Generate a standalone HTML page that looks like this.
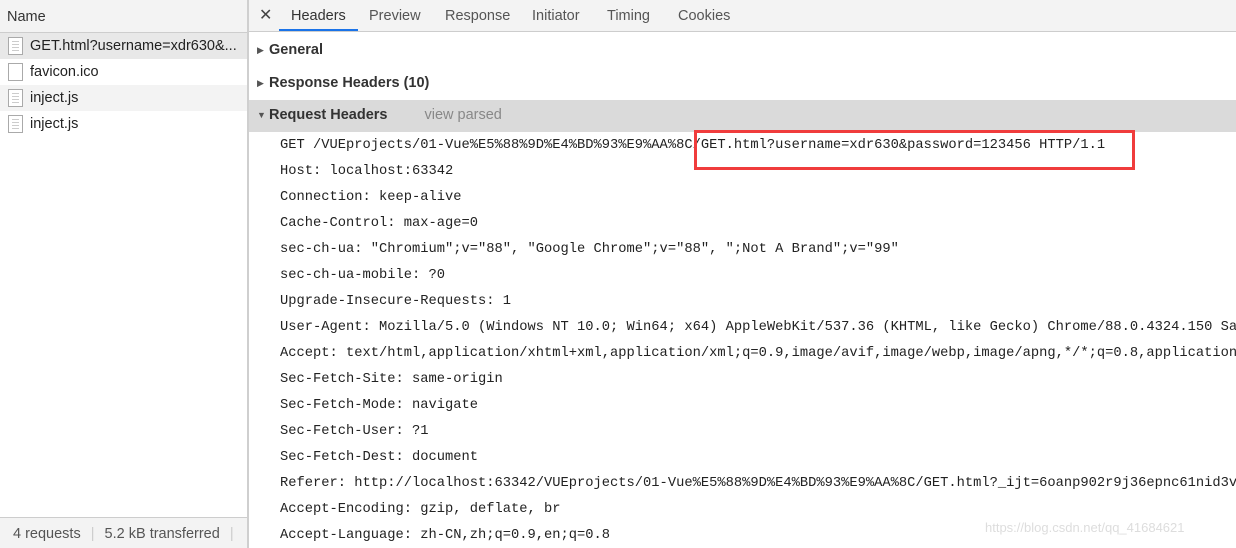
<!DOCTYPE html>
<html><head><style>
*{margin:0;padding:0;box-sizing:border-box}
body{width:1236px;height:548px;overflow:hidden;background:#fff;font-family:"Liberation Sans",sans-serif;position:relative;color:#333}
.left{position:absolute;left:0;top:0;width:247px;height:548px;background:#fff;overflow:hidden}
.sep{position:absolute;left:247px;top:0;width:2px;height:548px;background:#cfcfcf}
.lh{height:33px;background:#f3f3f3;border-bottom:1px solid #cdcdcd;font-size:14.5px;padding:9px 7px;color:#333}
.row{height:26px;font-size:14.5px;padding:5px 0 0 30px;position:relative;color:#222;white-space:nowrap}
.row .ic{position:absolute;left:8px;top:4px;width:15px;height:18px;border:1px solid #aaa;background:#fff}
.row .ic.l::after{content:"";position:absolute;left:3px;top:3px;width:7px;height:10px;background:repeating-linear-gradient(#ccc 0 1px,transparent 1px 3px)}
.foot{position:absolute;left:0;top:517px;width:247px;height:31px;background:#f3f3f3;border-top:1px solid #cdcdcd;font-size:14.5px;color:#555;padding:8px 13px;white-space:nowrap}
.right{position:absolute;left:249px;top:0;width:987px;height:548px;overflow:hidden}
.tabs{height:32px;background:#f3f3f3;border-bottom:1px solid #cdcdcd;font-size:14.5px;position:relative;color:#555}
.tabs span{position:absolute;top:8px}
.mono{font-family:"Liberation Mono",monospace;font-size:13.75px;color:#222;position:absolute;left:31px;white-space:nowrap}
.sec{position:absolute;left:0;width:987px;font-size:14.5px;font-weight:bold;color:#333;padding-left:20px}
.tri{position:absolute;left:8px;font-size:9px;color:#555;font-weight:normal}
</style></head><body>
<div class="left">
<div class="lh">Name</div>
<div class="row" style="background:#e8e8e8"><div class="ic l"></div>GET.html?username=xdr630&amp;...</div>
<div class="row"><div class="ic"></div>favicon.ico</div>
<div class="row" style="background:#f3f3f3"><div class="ic l"></div>inject.js</div>
<div class="row"><div class="ic l"></div>inject.js</div>
<div class="foot">4 requests <span style="color:#ccc;margin:0 6px">|</span> 5.2 kB transferred <span style="color:#ccc;margin-left:6px">|</span></div>
</div>
<div class="sep"></div>
<div class="right">
<div class="tabs">
<span style="left:10px;top:5px;font-size:16px;color:#444">✕</span>
<span style="left:42px;color:#333">Headers</span>
<div style="position:absolute;left:30px;top:29px;width:79px;height:2px;background:#1a73e8"></div>
<span style="left:120px">Preview</span>
<span style="left:196px">Response</span>
<span style="left:283px">Initiator</span>
<span style="left:358px">Timing</span>
<span style="left:429px">Cookies</span>
</div>
<div class="sec" style="top:42px"><span class="tri" style="top:3px">▶</span>General</div>
<div class="sec" style="top:75px"><span class="tri" style="top:3px">▶</span>Response Headers (10)</div>
<div class="sec" style="top:100px;height:32px;background:#dadada;padding-top:7px"><span class="tri" style="top:10px">▼</span>Request Headers<span style="font-weight:normal;color:#888;margin-left:37px">view parsed</span></div>
<div class="mono" style="top:138px">GET /VUEprojects/01-Vue%E5%88%9D%E4%BD%93%E9%AA%8C/GET.html?username=xdr630&amp;password=123456 HTTP/1.1</div>
<div class="mono" style="top:164px">Host: localhost:63342</div>
<div class="mono" style="top:190px">Connection: keep-alive</div>
<div class="mono" style="top:216px">Cache-Control: max-age=0</div>
<div class="mono" style="top:242px">sec-ch-ua: "Chromium";v="88", "Google Chrome";v="88", ";Not A Brand";v="99"</div>
<div class="mono" style="top:268px">sec-ch-ua-mobile: ?0</div>
<div class="mono" style="top:294px">Upgrade-Insecure-Requests: 1</div>
<div class="mono" style="top:320px">User-Agent: Mozilla/5.0 (Windows NT 10.0; Win64; x64) AppleWebKit/537.36 (KHTML, like Gecko) Chrome/88.0.4324.150 Safari/537.36</div>
<div class="mono" style="top:346px">Accept: text/html,application/xhtml+xml,application/xml;q=0.9,image/avif,image/webp,image/apng,*/*;q=0.8,application/signed-exchange</div>
<div class="mono" style="top:372px">Sec-Fetch-Site: same-origin</div>
<div class="mono" style="top:398px">Sec-Fetch-Mode: navigate</div>
<div class="mono" style="top:424px">Sec-Fetch-User: ?1</div>
<div class="mono" style="top:450px">Sec-Fetch-Dest: document</div>
<div class="mono" style="top:476px">Referer: http://localhost:63342/VUEprojects/01-Vue%E5%88%9D%E4%BD%93%E9%AA%8C/GET.html?_ijt=6oanp902r9j36epnc61nid3v</div>
<div class="mono" style="top:502px">Accept-Encoding: gzip, deflate, br</div>
<div class="mono" style="top:528px">Accept-Language: zh-CN,zh;q=0.9,en;q=0.8</div>
<div style="position:absolute;left:445px;top:130px;width:441px;height:40px;border:3px solid #f03c3c"></div>
<div style="position:absolute;left:736px;top:520px;font-size:13px;color:#ddd">https://blog.csdn.net/qq_41684621</div>
</div>
</body></html>
